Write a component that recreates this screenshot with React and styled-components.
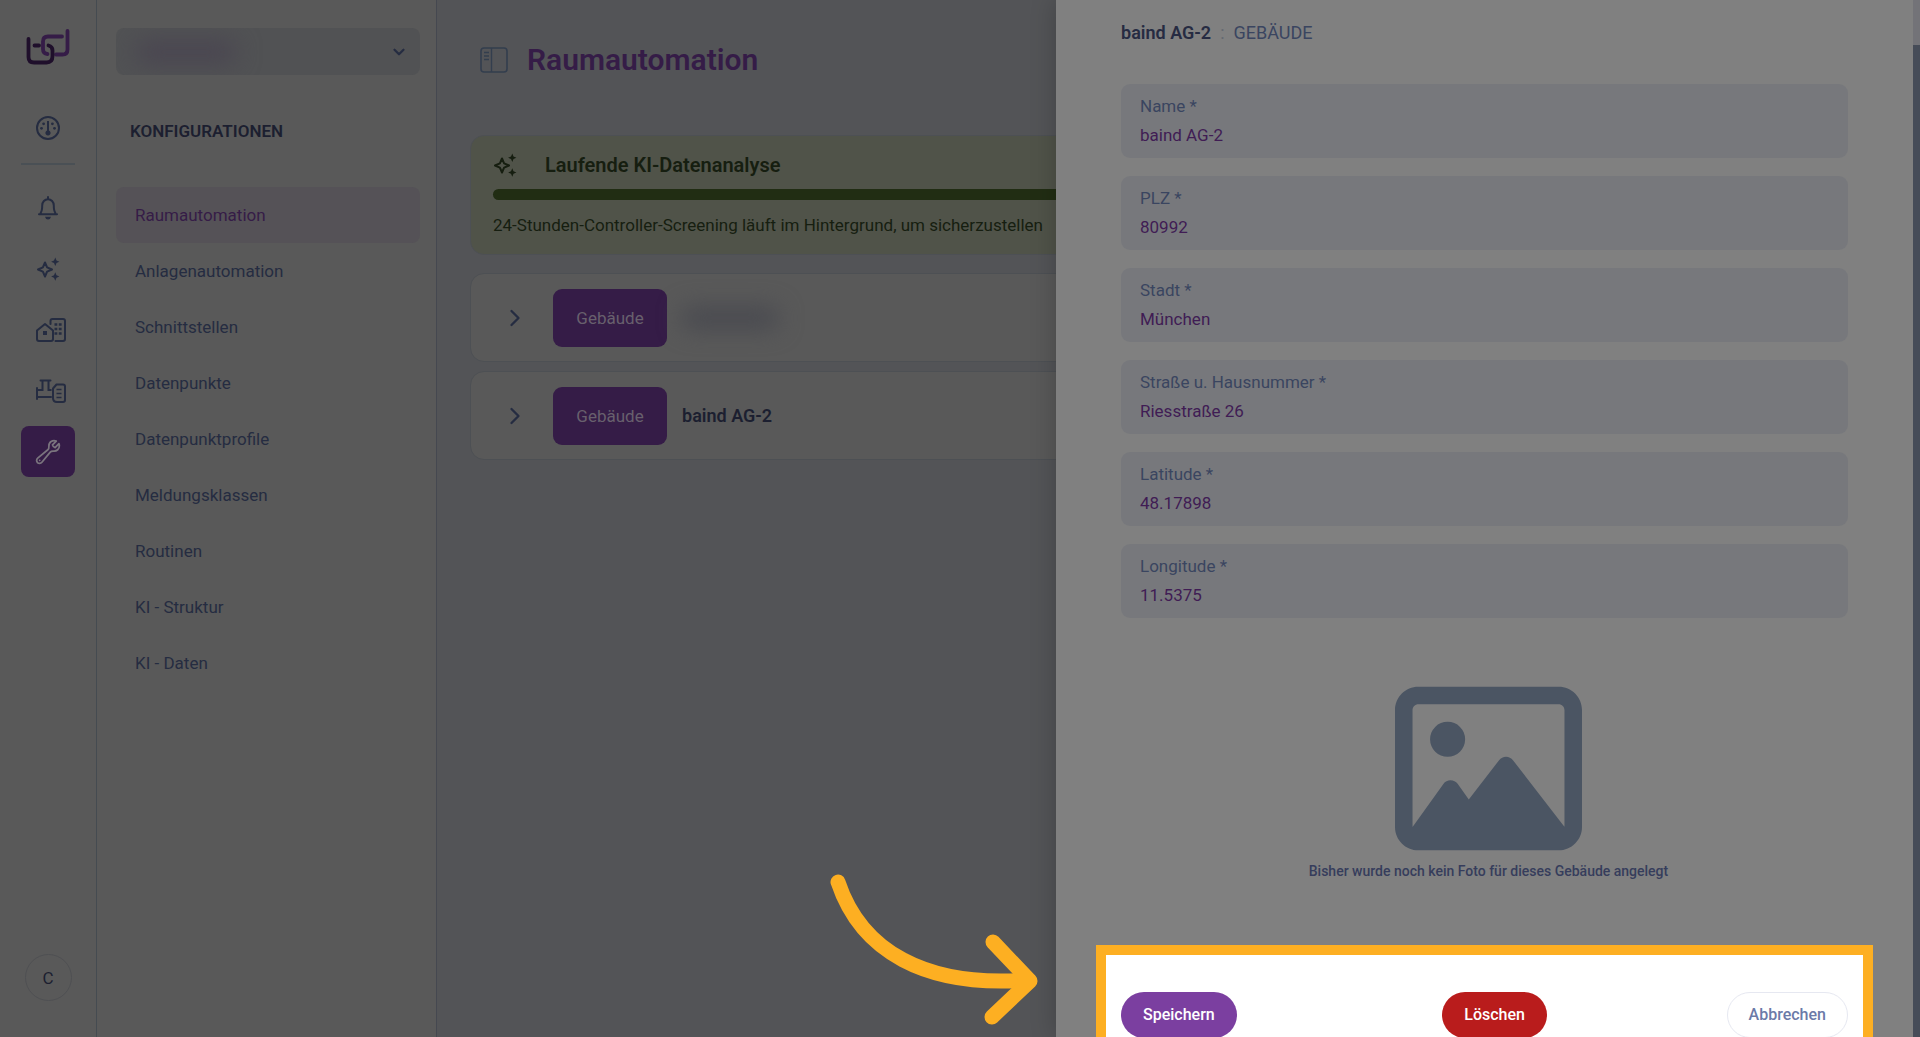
import React from "react";
import styled, { createGlobalStyle, css } from "styled-components";
import { FaRegImage } from "react-icons/fa6";
import { HiOutlineWrench } from "react-icons/hi2";
import { ChevronDown, ChevronRight } from "lucide-react";

const GlobalStyle = createGlobalStyle`
  * {
    box-sizing: border-box;
  }
  body {
    margin: 0;
    overflow: hidden;
    font-family: Roboto, "Liberation Sans", sans-serif;
    font-size: 17px;
    line-height: 24px;
    color: #252c41;
    background-color: #535457;
  }
  button, input {
    font: inherit;
  }
`;

const Page = styled.div`
  display: flex;
  height: 100vh;
  overflow: hidden;
`;

const Rail = styled.nav`
  display: flex;
  flex-direction: column;
  align-items: center;
  flex: 0 0 97px;
  padding: 28px 0 36px;
  background-color: #595959;
  border-right: 1px solid #454b51;
`;

const Logo = styled.a`
  display: flex;
  margin-bottom: 36px;
`;

const RailButton = styled.button`
  display: flex;
  align-items: center;
  justify-content: center;
  width: 54px;
  height: 51px;
  margin-bottom: 10px;
  padding: 0 0 0 ${(p) => (p.$wide ? 6 : 0)}px;
  border: none;
  border-radius: 8px;
  color: ${(p) => (p.$active ? "#7a747e" : "#252c41")};
  background-color: ${(p) => (p.$active ? "#351c47" : "transparent")};
`;

const RailDivider = styled.hr`
  width: 54px;
  height: 2px;
  margin: 0 0 17px;
  border: none;
  background-color: #4a5055;
`;

const Avatar = styled.button`
  width: 47px;
  height: 47px;
  margin-top: auto;
  padding: 0;
  border: 1px solid #4f5053;
  border-radius: 50%;
  color: #1c1f30;
  font-size: 17px;
  background-color: #595959;
`;

const Sidebar = styled.aside`
  flex: 0 0 340px;
  padding: 28px 16px 0 19px;
  background-color: #595959;
  border-right: 1px solid #454850;
`;

const TenantButton = styled.button`
  display: flex;
  align-items: center;
  justify-content: space-between;
  width: 100%;
  height: 47px;
  padding: 0 12px 0 20px;
  border: none;
  border-radius: 8px;
  color: #252c41;
  background-color: #515254;
  overflow: hidden;
`;

const Redacted = styled.span`
  width: ${(p) => p.$width}px;
  height: 20px;
  border-radius: 8px;
  background-color: ${(p) => p.$color};
  filter: blur(12px);
`;

const SidebarTitle = styled.h2`
  margin: 44px 14px;
  font-size: 17px;
  line-height: 24px;
  font-weight: 600;
  color: #1c1f30;
`;

const SidebarLink = styled.a`
  display: flex;
  align-items: center;
  height: 56px;
  padding: 0 19px;
  border-radius: 8px;
  font-size: 17px;
  text-decoration: none;
  color: ${(p) => (p.$active ? "#351c47" : "#252c41")};
  background-color: ${(p) => (p.$active ? "#555257" : "transparent")};
`;

const Main = styled.main`
  flex: 1;
  min-width: 0;
  padding: 42px 0 0 33px;
  overflow: hidden;
  background-color: #535457;
`;

const PageHeader = styled.header`
  display: flex;
  align-items: center;
  gap: 19px;
  height: 36px;
  margin-bottom: 57px;
  padding-left: 10px;
`;

const IconButton = styled.button`
  display: flex;
  padding: 0;
  border: none;
  color: ${(p) => p.$color || "#333e4e"};
  background: none;
`;

const PageTitle = styled.h1`
  margin: 0;
  font-size: 30px;
  line-height: 36px;
  font-weight: 600;
  color: #351c47;
`;

const Card = styled.section`
  margin-bottom: 9px;
  border: 1px solid #4d5054;
  border-radius: 14px;
  background-color: #595959;
`;

const AnalysisCard = styled(Card)`
  height: 120px;
  margin-bottom: 18px;
  padding: 16px 22px;
  color: #161e10;
  background-color: #505349;
  white-space: nowrap;
  overflow: hidden;
`;

const AnalysisHead = styled.div`
  display: flex;
  align-items: center;
  gap: 28px;
  height: 26px;
`;

const AnalysisTitle = styled.h3`
  margin: 0;
  font-size: 20px;
  line-height: 26px;
  font-weight: 600;
`;

const ProgressBar = styled.div`
  height: 11px;
  margin: 11px 0 13px;
  border-radius: 6px;
  background-color: #212d13;
`;

const AnalysisText = styled.p`
  margin: 0;
`;

const BuildingRow = styled(Card)`
  display: flex;
  align-items: center;
  height: 89px;
  padding-left: 30px;
`;

const Tag = styled.span`
  display: flex;
  align-items: center;
  justify-content: center;
  width: 114px;
  height: 58px;
  margin: 0 15px 0 24px;
  border-radius: 9px;
  color: #68606d;
  background-color: #351c47;
`;

const BuildingName = styled.strong`
  font-size: 18px;
  font-weight: 600;
  color: #1c1f30;
`;

// Lies over the page, slid in from the right
const Drawer = styled.div`
  position: absolute;
  top: 0;
  right: 0;
  bottom: 0;
  display: flex;
  width: 45%;
  background-color: #808080;
  box-shadow: 0 0 24px rgba(0, 0, 0, 0.22);
  overflow: hidden;
`;

const DrawerBody = styled.div`
  display: flex;
  flex-direction: column;
  flex: 1;
  min-width: 0;
`;

const ScrollTrack = styled.div`
  flex: 0 0 7px;
  padding-top: 45px;
  background-color: #737378;
`;

const ScrollThumb = styled.div`
  height: 100%;
  background-color: #464c58;
`;

const Crumbs = styled.h2`
  display: flex;
  gap: 9px;
  margin: 21px 65px 39px;
  font-size: 18px;
  line-height: 24px;
  font-weight: 400;
  color: #3a4560;
`;

const CrumbName = styled.span`
  font-weight: 600;
  color: #262b42;
`;

const CrumbColon = styled.span`
  color: #656971;
`;

const Form = styled.form`
  display: flex;
  flex-direction: column;
  flex: 1;
`;

const Fields = styled.div`
  display: grid;
  gap: 18px;
  margin: 0 65px;
`;

const Field = styled.label`
  display: flex;
  flex-direction: column;
  gap: 5px;
  height: 74px;
  padding: 10px 19px;
  border-radius: 9px;
  color: #3a4560;
  background-color: #77787c;
`;

const FieldInput = styled.input`
  width: 100%;
  height: 24px;
  padding: 0;
  border: none;
  outline: none;
  color: #401c54;
  background: none;
`;

const Photo = styled.figure`
  display: flex;
  flex-direction: column;
  align-items: center;
  margin: 57px 0 64px 8px;
  color: #4b5563;
`;

const PhotoCaption = styled.figcaption`
  font-size: 14px;
  line-height: 19px;
  font-weight: 500;
  color: #363d5c;
`;

const Footer = styled.div`
  display: flex;
  justify-content: space-between;
  flex: 0 0 auto;
  margin: 0 40px;
  padding: 37px 15px;
  border: 10px solid #fdaf22;
  border-bottom: none;
  background-color: #ffffff;
`;

const variants = {
  primary: css`
    color: #ffffff;
    background-color: #7b3fa0;
  `,
  danger: css`
    margin-left: 26px;
    color: #ffffff;
    background-color: #b91c1c;
  `,
  outline: css`
    color: #6b7aa8;
    background-color: #ffffff;
    border-color: #e6e8f1;
  `,
};

const PillButton = styled.button`
  height: 46px;
  padding: 0 21px;
  border: 1px solid transparent;
  border-radius: 23px;
  font-size: 16px;
  font-weight: 500;
  ${(p) => variants[p.$variant]}
`;

const Arrow = styled.svg`
  position: absolute;
  right: 880px;
  bottom: 8px;
  width: 212px;
  height: 158px;
`;

const LogoMark = () => (
  <svg width="44" height="38" viewBox="0 0 44 38" fill="none" strokeWidth="3.8" strokeLinecap="round">
    <path d="M36 8.5H22q-5 0-5 5V21q0 4.500 4.500 5M30 26.500h6.500q5 0 5-5V3" stroke="#351c47" />
    <path d="M2.500 11v18q0 5.500 5.500 5.500h12.500q6 0 6-6.500v-5.500q0-4-4-5M8.500 17.500H13" stroke="#1f0f2b" />
  </svg>
);

const SparklesIcon = () => (
  <svg width="24" height="24" viewBox="0 0 24 24" fill="currentColor">
    <path
      d="M9 5.500 11.100 10.400 16 12.500l-4.900 2.100L9 19.500l-2.100-4.900L2 12.500l4.900-2.100z"
      fill="none"
      stroke="currentColor"
      strokeWidth="2"
      strokeLinejoin="round"
    />
    <path d="M19.300.5l1.200 2.900 2.900 1.300-2.900 1.300-1.200 2.900L18 6l-2.900-1.300L18 3.400z" />
    <path d="M19.300 15.300l1.200 2.900 2.900 1.300-2.900 1.300-1.200 2.900-1.300-2.900-2.900-1.300 2.900-1.300z" />
  </svg>
);

const GaugeIcon = () => (
  <svg width="24" height="24" viewBox="0 0 24 24" fill="currentColor">
    <circle cx="12" cy="12" r="11" fill="none" stroke="currentColor" strokeWidth="2" />
    <path d="M11 5h2v9.400a2.600 2.600 0 1 1-2 0z" />
    <circle cx="5.5" cy="12.300" r="1.400" />
    <circle cx="18.5" cy="12.300" r="1.400" />
    <circle cx="7.600" cy="7.800" r="1.400" />
    <circle cx="16.400" cy="7.800" r="1.400" />
  </svg>
);

const BellIcon = () => (
  <svg width="24" height="24" viewBox="0 0 24 24" fill="none" stroke="currentColor" strokeWidth="2">
    <path
      d="M3 18.300h18M4.800 18v-1.500q1.400-1.800 1.400-7a5.800 6.300 0 0 1 11.600 0q0 5.200 1.400 7V18"
      strokeLinecap="round"
    />
    <path d="M12 1v2" strokeLinecap="round" />
    <path d="M9 20.700h6q-.6 2.800-3 2.800t-3-2.800z" fill="currentColor" stroke="none" />
  </svg>
);

const BuildingsIcon = () => (
  <svg width="30" height="24" viewBox="0 0 30 24" fill="none" stroke="currentColor" strokeWidth="2">
    <path d="M1 12.500 9 6l8 6.500V21q0 2-2 2H3q-2 0-2-2z" strokeLinejoin="round" />
    <path d="M14.500 6V3q0-2 2-2H27q2 0 2 2v18q0 2-2 2h-7.500" strokeLinecap="round" />
    <rect x="7" y="13" width="4" height="4" fill="currentColor" stroke="none" />
    <path d="M18.500 6.500H26M18.500 11H26M18.500 15.500H26" strokeWidth="2.600" strokeDasharray="2.800 1.500" />
  </svg>
);

const ValveIcon = () => (
  <svg width="30" height="24" viewBox="0 0 30 24" fill="none" stroke="currentColor" strokeWidth="2">
    <path d="M4.500 1.500h10M6.500 2v9H1.200M12.500 2v9h2.300M1 9v11M1 18h14" strokeLinecap="round" />
    <path d="M20.500 5.500H27q2 0 2 2V21q0 2-2 2h-6q-4 0-4-4V9.500z" strokeLinejoin="round" />
    <path d="M20.500 10.500h5M20.500 14.500h5M20.500 18.500h5" strokeWidth="1.600" />
  </svg>
);

const PanelIcon = () => (
  <svg width="28" height="26" viewBox="0 0 28 26" fill="none" stroke="currentColor">
    <rect x="1" y="1" width="26" height="24" rx="3" strokeWidth="1.600" />
    <path d="M11.500 1v24" strokeWidth="1.400" />
    <path d="M4 5.500h5M4 9h5M4 12.500h5" strokeWidth="1.400" />
  </svg>
);

const menu = [
  "Raumautomation",
  "Anlagenautomation",
  "Schnittstellen",
  "Datenpunkte",
  "Datenpunktprofile",
  "Meldungsklassen",
  "Routinen",
  "KI - Struktur",
  "KI - Daten",
];

const fields = [
  { id: "name", label: "Name *", value: "baind AG-2" },
  { id: "plz", label: "PLZ *", value: "80992" },
  { id: "city", label: "Stadt *", value: "München" },
  { id: "street", label: "Straße u. Hausnummer *", value: "Riesstraße 26" },
  { id: "lat", label: "Latitude *", value: "48.17898" },
  { id: "lng", label: "Longitude *", value: "11.5375" },
];

const App = () => {
  return (
    <Page>
      <GlobalStyle />
      <Rail>
        <Logo href="#" aria-label="Start">
          <LogoMark />
        </Logo>
        <RailButton aria-label="Dashboard">
          <GaugeIcon />
        </RailButton>
        <RailDivider />
        <RailButton aria-label="Meldungen">
          <BellIcon />
        </RailButton>
        <RailButton aria-label="KI">
          <SparklesIcon />
        </RailButton>
        <RailButton aria-label="Gebäude" $wide>
          <BuildingsIcon />
        </RailButton>
        <RailButton aria-label="Anlagen" $wide>
          <ValveIcon />
        </RailButton>
        <RailButton aria-label="Konfiguration" $active>
          <HiOutlineWrench size={28} />
        </RailButton>
        <Avatar>C</Avatar>
      </Rail>

      <Sidebar>
        <TenantButton aria-label="Mandant">
          <Redacted $width={100} $color="#484350" />
          <ChevronDown size={18} strokeWidth={3} />
        </TenantButton>
        <SidebarTitle>KONFIGURATIONEN</SidebarTitle>
        {menu.map((item, index) => (
          <SidebarLink key={item} href="#" $active={index === 0}>
            {item}
          </SidebarLink>
        ))}
      </Sidebar>

      <Main>
        <PageHeader>
          <IconButton aria-label="Seitenleiste">
            <PanelIcon />
          </IconButton>
          <PageTitle>Raumautomation</PageTitle>
        </PageHeader>
        <AnalysisCard>
          <AnalysisHead>
            <SparklesIcon />
            <AnalysisTitle>Laufende KI-Datenanalyse</AnalysisTitle>
          </AnalysisHead>
          <ProgressBar />
          <AnalysisText>
            24-Stunden-Controller-Screening läuft im Hintergrund, um sicherzustellen
          </AnalysisText>
        </AnalysisCard>
        <BuildingRow>
          <IconButton aria-label="Aufklappen" $color="#252c41">
            <ChevronRight size={28} strokeWidth={2} />
          </IconButton>
          <Tag>Gebäude</Tag>
          <Redacted $width={96} $color="#46474e" />
        </BuildingRow>
        <BuildingRow>
          <IconButton aria-label="Aufklappen" $color="#252c41">
            <ChevronRight size={28} strokeWidth={2} />
          </IconButton>
          <Tag>Gebäude</Tag>
          <BuildingName>baind AG-2</BuildingName>
        </BuildingRow>
      </Main>

      <Drawer>
        <DrawerBody>
          <Crumbs>
            <CrumbName>baind AG-2</CrumbName>
            <CrumbColon>:</CrumbColon>
            <span>GEBÄUDE</span>
          </Crumbs>
          <Form>
            <Fields>
              {fields.map(({ id, label, value }) => (
                <Field key={id} htmlFor={id}>
                  {label}
                  <FieldInput id={id} defaultValue={value} />
                </Field>
              ))}
            </Fields>
            <Photo>
              <FaRegImage size={187} />
              <PhotoCaption>Bisher wurde noch kein Foto für dieses Gebäude angelegt</PhotoCaption>
            </Photo>
            <Footer>
              <PillButton type="button" $variant="primary">
                Speichern
              </PillButton>
              <PillButton type="button" $variant="danger">
                Löschen
              </PillButton>
              <PillButton type="button" $variant="outline">
                Abbrechen
              </PillButton>
            </Footer>
          </Form>
        </DrawerBody>
        <ScrollTrack>
          <ScrollThumb />
        </ScrollTrack>
      </Drawer>

      <Arrow
        viewBox="828 871 212 158"
        fill="none"
        stroke="#fdaf22"
        strokeWidth="15"
        strokeLinecap="round"
        strokeLinejoin="round"
      >
        <path d="M838 882C861 951 925 988 1028 980" />
        <path d="M993 942 1030 981 992 1017" />
      </Arrow>
    </Page>
  );
};

export default App;
